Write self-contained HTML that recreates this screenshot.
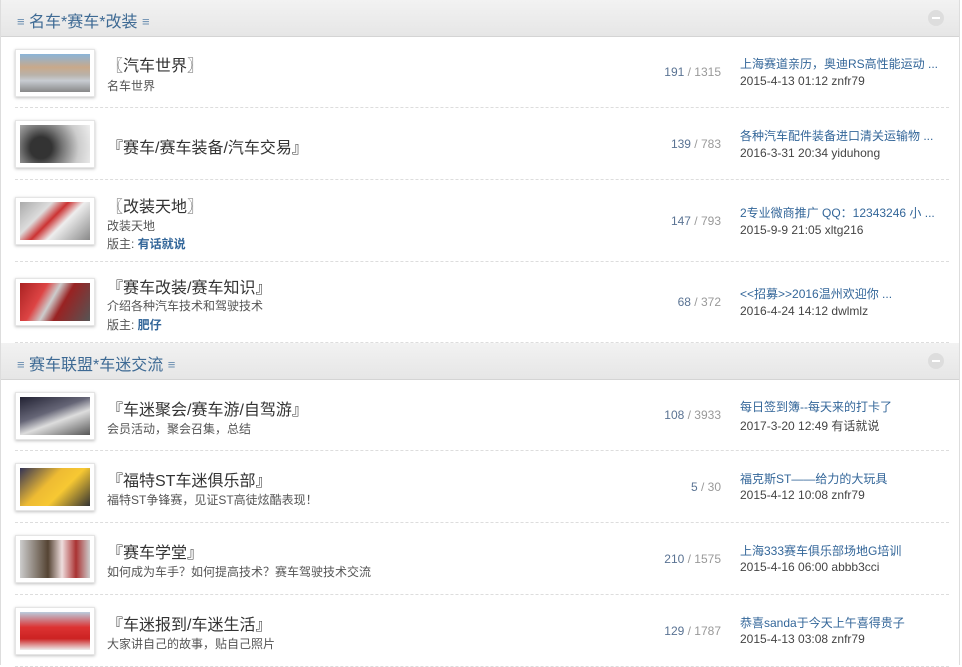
<!DOCTYPE html>
<html><head><meta charset="utf-8"><style>
*{margin:0;padding:0;box-sizing:border-box}
body{width:962px;height:665px;overflow:hidden;background:#fff;font-family:"Liberation Sans","Noto Sans CJK SC",sans-serif;position:relative}
.wrap{position:absolute;left:0;top:0;width:960px;height:665px;border-left:1px solid #ddd;border-right:1px solid #ddd}
.hd{position:absolute;left:0;width:958px;height:37px;background:linear-gradient(#f2f2f2,#e6e6e6);border-bottom:1px solid #d4d4d4}
.hd span{position:absolute;left:16px;top:8px;font-size:16px;color:#3e6a94}
.hd span i{font-style:normal;font-size:13px;color:#6a8db0;vertical-align:1px}
.hd b{position:absolute;left:927px;top:10px;width:16px;height:16px;border-radius:50%;background:#ddd}
.hd b:after{content:"";position:absolute;left:4px;top:7px;width:8px;height:2px;background:#fff}
.row{position:absolute;left:0;width:958px}
.row:after{content:"";position:absolute;left:14px;right:10px;bottom:0;border-bottom:1px dashed #ddd}
.th{position:absolute;left:14px;width:80px;height:48px;background:#fff;border:1px solid #e5e5e5;box-shadow:0 1px 3px rgba(0,0,0,.25);padding:4px}
.th div{width:100%;height:100%}
.t{position:absolute;left:106px;font-size:16px;color:#333}
.s{position:absolute;left:106px;font-size:12px;color:#555}
.s b{color:#336699}
.c{position:absolute;right:238px;font-size:12px;color:#5a7393}
.c em{font-style:normal;color:#999}
.l{position:absolute;left:739px;font-size:12px;color:#336699;white-space:nowrap}
.d{position:absolute;left:739px;font-size:12px;color:#444}
</style></head><body><div class="wrap">
<div class="hd" style="top:0"><span><i>≡</i> 名车*赛车*改装 <i>≡</i></span><b></b></div>

<div class="row" style="top:37px;height:71px">
<div class="th" style="top:12px"><div style="background:linear-gradient(#8ab4d8 0,#c9a98a 35%,#b9b2aa 55%,#c8ccd2 70%,#888 100%)"></div></div>
<div class="t" style="top:15px">〖汽车世界〗</div><div class="s" style="top:40px">名车世界</div>
<div class="c" style="top:28px">191 <em>/ 1315</em></div>
<div class="l" style="top:18px">上海赛道亲历，奥迪RS高性能运动 ...</div><div class="d" style="top:37px">2015-4-13 01:12 znfr79</div></div>

<div class="row" style="top:108px;height:72px">
<div class="th" style="top:12px"><div style="background:radial-gradient(circle at 30% 60%,#333 20%,#777 40%,#ccc 70%,#eee)"></div></div>
<div class="t" style="top:26px">『赛车/赛车装备/汽车交易』</div>
<div class="c" style="top:29px">139 <em>/ 783</em></div>
<div class="l" style="top:19px">各种汽车配件装备进口清关运输物 ...</div><div class="d" style="top:38px">2016-3-31 20:34 yiduhong</div></div>

<div class="row" style="top:180px;height:82px">
<div class="th" style="top:17px"><div style="background:linear-gradient(135deg,#aaa,#ddd 30%,#c33 45%,#eee 60%,#888)"></div></div>
<div class="t" style="top:13px">〖改装天地〗</div><div class="s" style="top:37px">改装天地</div><div class="s" style="top:55px">版主: <b>有话就说</b></div>
<div class="c" style="top:34px">147 <em>/ 793</em></div>
<div class="l" style="top:24px">2专业微商推广 QQ：12343246 小 ...</div><div class="d" style="top:43px">2015-9-9 21:05 xltg216</div></div>

<div class="row" style="top:262px;height:81px">
<div class="th" style="top:16px"><div style="background:linear-gradient(120deg,#a22,#d44 30%,#ccc 45%,#922 60%,#555)"></div></div>
<div class="t" style="top:12px">『赛车改装/赛车知识』</div><div class="s" style="top:35px">介绍各种汽车技术和驾驶技术</div><div class="s" style="top:54px">版主: <b>肥仔</b></div>
<div class="c" style="top:33px">68 <em>/ 372</em></div>
<div class="l" style="top:23px">&lt;&lt;招募&gt;&gt;2016温州欢迎你 ...</div><div class="d" style="top:42px">2016-4-24 14:12 dwlmlz</div></div>

<div class="hd" style="top:343px"><span><i>≡</i> 赛车联盟*车迷交流 <i>≡</i></span><b></b></div>

<div class="row" style="top:380px;height:71px">
<div class="th" style="top:12px"><div style="background:linear-gradient(160deg,#223,#667 40%,#ddd 60%,#555)"></div></div>
<div class="t" style="top:16px">『车迷聚会/赛车游/自驾游』</div><div class="s" style="top:40px">会员活动，聚会召集，总结</div>
<div class="c" style="top:28px">108 <em>/ 3933</em></div>
<div class="l" style="top:18px">每日签到簿--每天来的打卡了</div><div class="d" style="top:37px">2017-3-20 12:49 有话就说</div></div>

<div class="row" style="top:451px;height:72px">
<div class="th" style="top:12px"><div style="background:linear-gradient(135deg,#335,#eb3 40%,#f7c833 60%,#333)"></div></div>
<div class="t" style="top:16px">『福特ST车迷俱乐部』</div><div class="s" style="top:40px">福特ST争锋赛，见证ST高徒炫酷表现！</div>
<div class="c" style="top:29px">5 <em>/ 30</em></div>
<div class="l" style="top:19px">福克斯ST——给力的大玩具</div><div class="d" style="top:37px">2015-4-12 10:08 znfr79</div></div>

<div class="row" style="top:523px;height:72px">
<div class="th" style="top:12px"><div style="background:linear-gradient(90deg,#ccc,#543 40%,#edd 60%,#a33 80%,#ccc)"></div></div>
<div class="t" style="top:16px">『赛车学堂』</div><div class="s" style="top:40px">如何成为车手？如何提高技术？赛车驾驶技术交流</div>
<div class="c" style="top:29px">210 <em>/ 1575</em></div>
<div class="l" style="top:19px">上海333赛车俱乐部场地G培训</div><div class="d" style="top:37px">2015-4-16 06:00 abbb3cci</div></div>

<div class="row" style="top:595px;height:72px">
<div class="th" style="top:12px"><div style="background:linear-gradient(#bcd 0,#d33 40%,#c22 70%,#eee)"></div></div>
<div class="t" style="top:16px">『车迷报到/车迷生活』</div><div class="s" style="top:40px">大家讲自己的故事，贴自己照片</div>
<div class="c" style="top:29px">129 <em>/ 1787</em></div>
<div class="l" style="top:19px">恭喜sanda于今天上午喜得贵子</div><div class="d" style="top:37px">2015-4-13 03:08 znfr79</div></div>
</div></body></html>
